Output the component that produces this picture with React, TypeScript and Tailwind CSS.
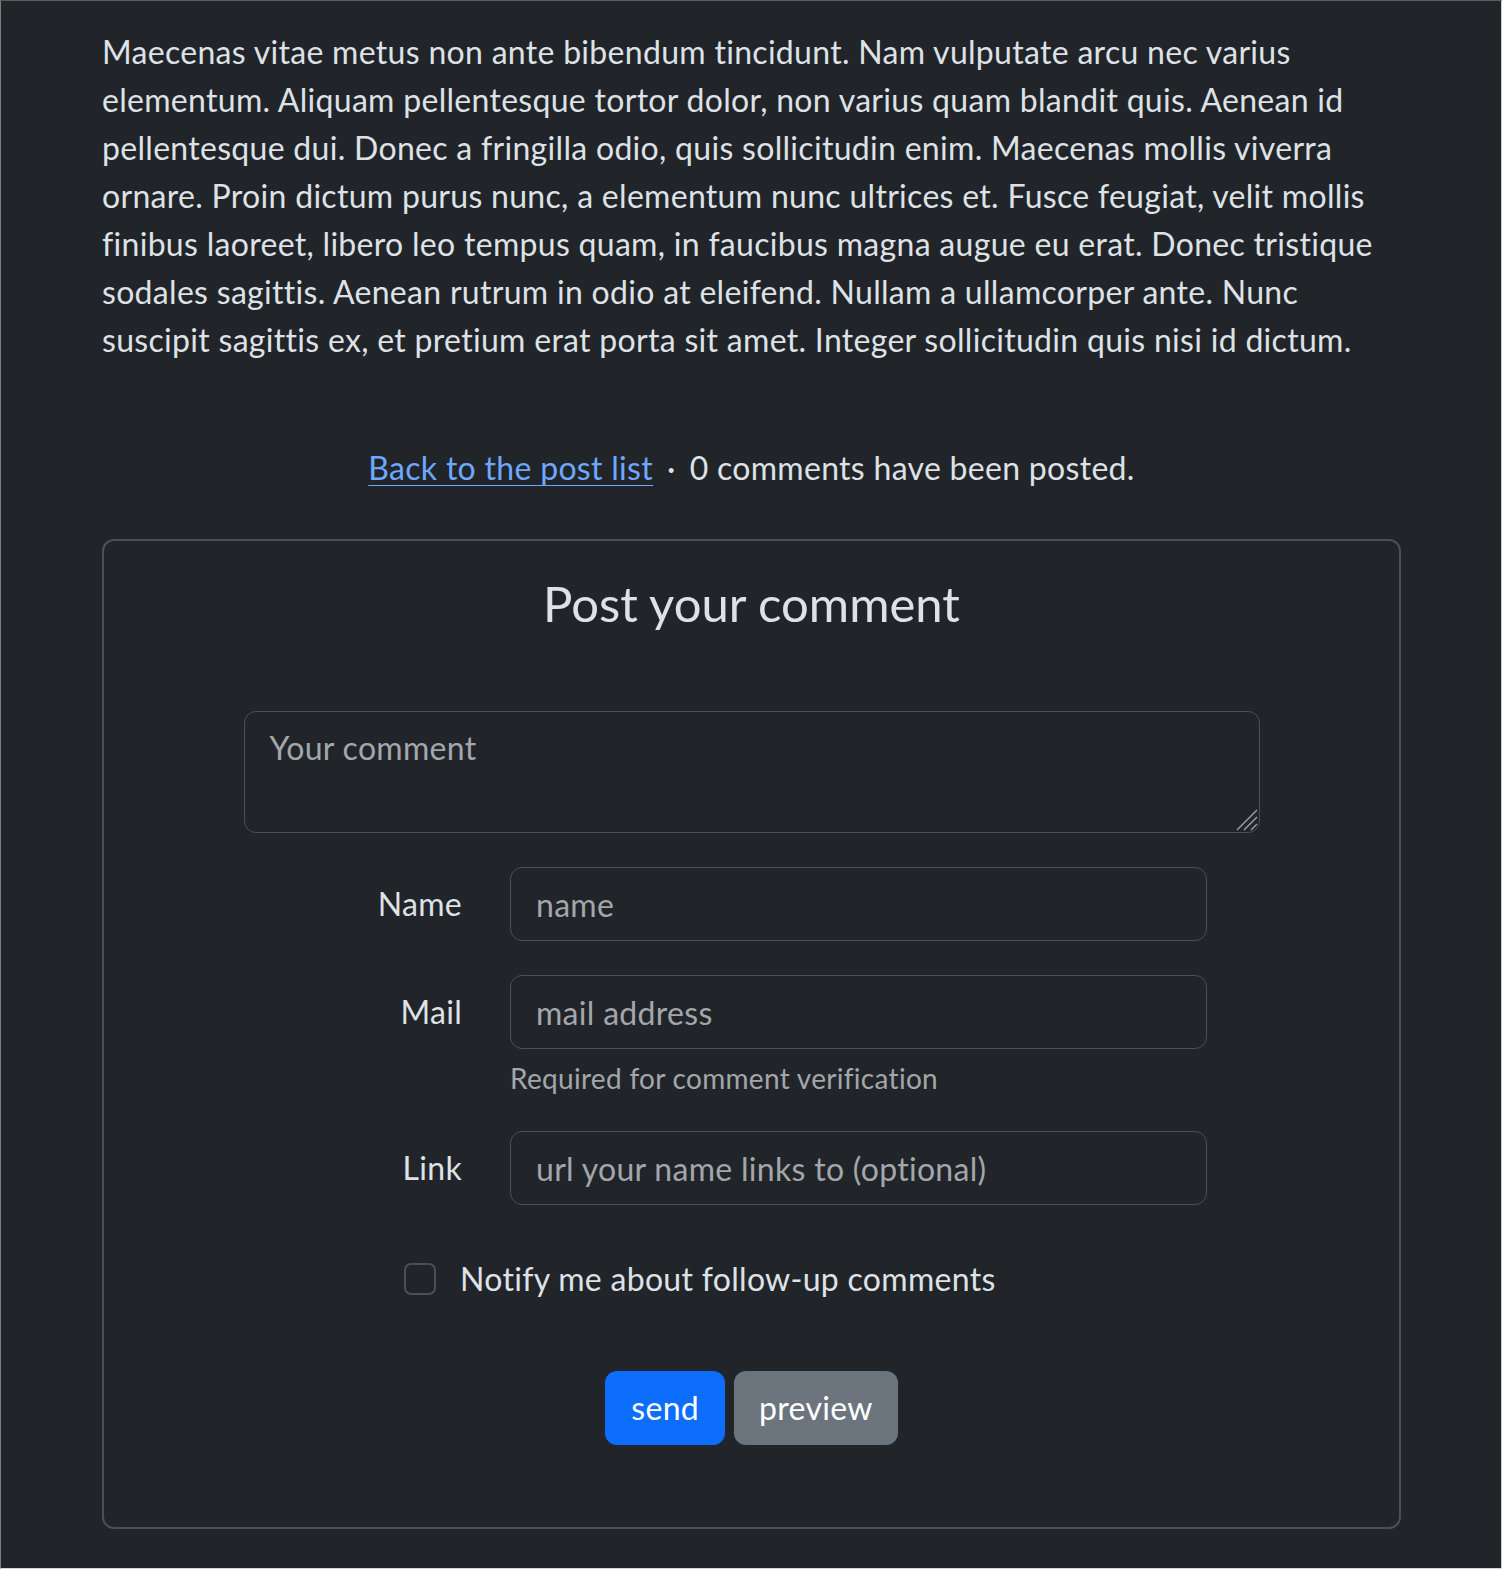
import React from "react";

const lines = [
  "Maecenas vitae metus non ante bibendum tincidunt. Nam vulputate arcu nec varius",
  "elementum. Aliquam pellentesque tortor dolor, non varius quam blandit quis. Aenean id",
  "pellentesque dui. Donec a fringilla odio, quis sollicitudin enim. Maecenas mollis viverra",
  "ornare. Proin dictum purus nunc, a elementum nunc ultrices et. Fusce feugiat, velit mollis",
  "finibus laoreet, libero leo tempus quam, in faucibus magna augue eu erat. Donec tristique",
  "sodales sagittis. Aenean rutrum in odio at eleifend. Nullam a ullamcorper ante. Nunc",
  "suscipit sagittis ex, et pretium erat porta sit amet. Integer sollicitudin quis nisi id dictum.",
];

function Field({ label, placeholder, help }: { label: string; placeholder: string; help?: string }) {
  return (
    <div className="flex items-start gap-[48px]">
      <label className="w-[218px] shrink-0 text-right leading-[48px] pt-[13px]">{label}</label>
      <div className="w-[697px]">
        <input
          type="text"
          placeholder={placeholder}
          className="w-full h-[74px] rounded-[12px] border border-[#495057] bg-[#212529] px-[25px] text-[32px] tracking-[0.3px] text-[#dee2e6] placeholder:text-[#a3a7ab] outline-none"
        />
        {help && <div className="mt-[8px] text-[28px] leading-[42px] text-[#a3a7ab]">{help}</div>}
      </div>
    </div>
  );
}

export default function App() {
  return (
    <div
      className="h-[1569px] bg-[#212529] text-[#dee2e6] text-[32px] leading-[48px] tracking-[0.3px] border-t border-l border-t-[#5c5c5c] border-l-[#7d7d7d] border-r border-b border-r-[#cfcfcf] border-b-[#d6d6d6] [color-scheme:dark]"
      style={{ fontFamily: "Lato, 'Noto Sans', sans-serif" }}
    >
      <div className="pl-[101px] pr-[100px] pt-[27px]">
        <p className="whitespace-nowrap">
          {lines.map((l, i) => (
            <React.Fragment key={i}>
              {l}
              {i < lines.length - 1 && <br />}
            </React.Fragment>
          ))}
        </p>

        <div className="mt-[80px] text-center">
          <a href="#" className="text-[#6ea8fe] underline underline-offset-[5px] decoration-1">
            Back to the post list
          </a>
          <span className="mx-[14px]">·</span>
          <span>0 comments have been posted.</span>
        </div>

        <div className="mt-[47px] h-[990px] rounded-[12px] border-2 border-[#495057]">
          <h3 className="pt-[29px] text-center text-[49px] leading-[67px] tracking-normal">Post your comment</h3>

          <div className="mt-[74px] flex flex-col items-center">
            <div className="relative">
              <textarea
                placeholder="Your comment"
                className="block w-[1016px] h-[122px] rounded-[12px] border border-[#495057] bg-[#212529] px-[25px] py-[12px] text-[32px] leading-[48px] tracking-[0.3px] text-[#dee2e6] placeholder:text-[#a3a7ab] outline-none resize-none"
              />
              <svg
                className="pointer-events-none absolute right-[2px] bottom-[2px]"
                width="24"
                height="24"
                viewBox="0 0 24 24"
              >
                <g stroke="#9aa0a6" strokeWidth="1.5">
                  <line x1="23" y1="3" x2="3" y2="23" />
                  <line x1="23" y1="10" x2="10" y2="23" />
                  <line x1="23" y1="17" x2="17" y2="23" />
                </g>
              </svg>
            </div>
          </div>

          <div className="mt-[34px] ml-[140px] flex flex-col gap-[34px]">
            <Field label="Name" placeholder="name" />
            <Field label="Mail" placeholder="mail address" help="Required for comment verification" />
          </div>
          <div className="mt-[32px] ml-[140px]">
            <Field label="Link" placeholder="url your name links to (optional)" />
          </div>

          <div className="mt-[50px] ml-[300px] flex items-center gap-[24px]">
            <span className="block w-[32px] h-[32px] rounded-[7px] border-2 border-[#495057] bg-[#212529]" />
            <span>Notify me about follow-up comments</span>
          </div>

          <div className="mt-[68px] flex justify-center gap-[9px]">
            <button className="h-[74px] rounded-[12px] bg-[#0d6efd] px-[26px] text-white">send</button>
            <button className="h-[74px] rounded-[12px] bg-[#6c757d] px-[25px] text-white">preview</button>
          </div>
        </div>
      </div>
    </div>
  );
}
